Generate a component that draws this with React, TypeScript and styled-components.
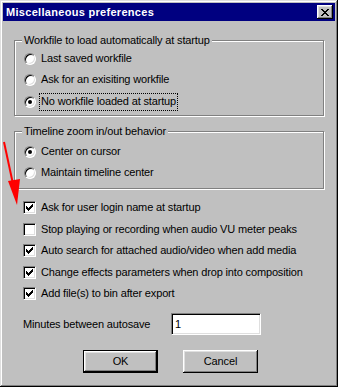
import React from 'react'
import styled, { createGlobalStyle } from 'styled-components'

const GlobalStyle = createGlobalStyle`
  html, body {
    margin: 0;
    padding: 0;
    background: #c0c0c0;
  }
  body {
    font-family: "Liberation Sans", Arial, sans-serif;
    font-size: 11px;
    letter-spacing: -0.15px;
    color: #000;
  }
`

const workfileOptions = [
  'Last saved workfile',
  'Ask for an exisiting workfile',
  'No workfile loaded at startup',
]

const zoomOptions = ['Center on cursor', 'Maintain timeline center']

const checks = [
  { label: 'Ask for user login name at startup', on: true },
  { label: 'Stop playing or recording when audio VU meter peaks', on: false },
  { label: 'Auto search for attached audio/video when add media', on: true },
  { label: 'Change effects parameters when drop into composition', on: true },
  { label: 'Add file(s) to bin after export', on: true },
]

const CheckMark = () => (
  <svg width="7" height="7" viewBox="0 0 7 7" shapeRendering="crispEdges">
    {[2, 3, 4, 3, 2, 1, 0].map((y, x) => (
      <rect key={x} x={x} y={y} width="1" height="3" fill="#000" />
    ))}
  </svg>
)

const CloseGlyph = () => (
  <svg width="8" height="7" viewBox="0 0 8 7" shapeRendering="crispEdges">
    {[0, 1, 2, 3, 4, 5, 6].map(i => (
      <React.Fragment key={i}>
        <rect x={i} y={i} width="2" height="1" fill="#000" />
        <rect x={6 - i} y={i} width="2" height="1" fill="#000" />
      </React.Fragment>
    ))}
  </svg>
)

const RedArrow = () => (
  <ArrowLayer width="30" height="80" viewBox="0 136 30 80">
    <line x1="4" y1="142" x2="13" y2="184" stroke="#f00" strokeWidth="2" />
    <polygon points="17,205 8,181 20,179" fill="#f00" />
  </ArrowLayer>
)

export default function App() {
  return (
    <>
      <GlobalStyle />
      <Window>
        <TitleBar>
          <TitleText>Miscellaneous preferences</TitleText>
          <CloseButton><CloseGlyph /></CloseButton>
        </TitleBar>
        <Body>
          <Group $h={76} $padTop={7}>
            <Legend>Workfile to load automatically at startup</Legend>
            {workfileOptions.map((o, i) => (
              <Row key={o}>
                <Radio $on={i === 2} />
                <Label $focus={i === 2}>{o}</Label>
              </Row>
            ))}
          </Group>
          <Group $h={58} $padTop={9} $gap={15}>
            <Legend>Timeline zoom in/out behavior</Legend>
            {zoomOptions.map((o, i) => (
              <Row key={o}>
                <Radio $on={i === 0} />
                <Label>{o}</Label>
              </Row>
            ))}
          </Group>
          <CheckList>
            {checks.map(c => (
              <Row key={c.label}>
                <Box>{c.on && <CheckMark />}</Box>
                <CheckLabel>{c.label}</CheckLabel>
              </Row>
            ))}
          </CheckList>
          <FieldRow>
            <FieldLabel>Minutes between autosave</FieldLabel>
            <Input>1</Input>
          </FieldRow>
          <Buttons>
            <Button $default>OK</Button>
            <Button>Cancel</Button>
          </Buttons>
        </Body>
        <RedArrow />
      </Window>
    </>
  )
}

const Window = styled.div`
  position: relative;
  width: 338px;
  height: 387px;
  box-sizing: border-box;
  padding: 3px;
  background: #c0c0c0;
  box-shadow:
    inset -1px -1px #000,
    inset 1px 1px #dfdfdf,
    inset -2px -2px #808080,
    inset 2px 2px #fff;
`

const TitleBar = styled.div`
  height: 18px;
  background: #000080;
  display: flex;
  align-items: center;
  justify-content: space-between;
  padding: 0 2px 0 3px;
`

const TitleText = styled.div`
  color: #fff;
  font-weight: bold;
  font-size: 11px;
  letter-spacing: 0.3px;
  line-height: 13px;
`

const CloseButton = styled.div`
  width: 16px;
  height: 14px;
  box-sizing: border-box;
  background: #c0c0c0;
  display: flex;
  align-items: center;
  justify-content: center;
  box-shadow:
    inset -1px -1px #000,
    inset 1px 1px #fff,
    inset -2px -2px #808080,
    inset 2px 2px #dfdfdf;
`

const Body = styled.div`
  padding: 19px 10px 0 11px;
  display: flex;
  flex-direction: column;
`

const Group = styled.div<{ $h: number; $padTop: number; $gap?: number }>`
  position: relative;
  height: ${p => p.$h}px;
  box-sizing: border-box;
  margin: ${p => p.$gap ?? 0}px 1px 0 0;
  padding: ${p => p.$padTop}px 0 0 9px;
  border: 1px solid #808080;
  box-shadow: 1px 1px 0 #fff, inset 1px 1px 0 #fff;
`

const Legend = styled.span`
  position: absolute;
  top: -7px;
  left: 7px;
  padding: 0 2px;
  line-height: 13px;
  background: #c0c0c0;
`

const Row = styled.div`
  height: 21.5px;
  display: flex;
  align-items: center;
`

const Radio = styled.span<{ $on?: boolean }>`
  position: relative;
  width: 12px;
  height: 12px;
  box-sizing: border-box;
  border-radius: 50%;
  background: #fff;
  border: 1px solid;
  border-color: #808080 #fff #fff #808080;
  box-shadow: inset 1px 1px #000, inset -1px -1px #dfdfdf;
  margin-right: 4px;
  flex: none;
  &::after {
    content: "";
    display: ${p => (p.$on ? 'block' : 'none')};
    position: absolute;
    left: 3px;
    top: 3px;
    width: 4px;
    height: 4px;
    border-radius: 50%;
    background: #000;
  }
`

const Label = styled.span<{ $focus?: boolean }>`
  padding: 1px 1px 2px;
  line-height: 13px;
  outline: ${p => (p.$focus ? '1px dotted #000' : 'none')};
`

const CheckList = styled.div`
  margin-top: 8px;
  padding-left: 9px;
`

const Box = styled.span`
  width: 13px;
  height: 13px;
  box-sizing: border-box;
  background: #fff;
  border: 1px solid;
  border-color: #808080 #fff #fff #808080;
  box-shadow: inset 1px 1px #000, inset -1px -1px #dfdfdf;
  display: flex;
  align-items: center;
  justify-content: center;
  margin-right: 5px;
  flex: none;
`

const CheckLabel = styled.span`
  line-height: 13px;
`

const FieldRow = styled.div`
  margin-top: 8px;
  padding-left: 9px;
  height: 22px;
  display: flex;
  align-items: center;
`

const FieldLabel = styled.span`
  width: 148px;
  flex: none;
`

const Input = styled.div`
  width: 90px;
  height: 22px;
  box-sizing: border-box;
  background: #fff;
  border: 1px solid;
  border-color: #808080 #fff #fff #808080;
  box-shadow: inset 1px 1px #000, inset -1px -1px #dfdfdf;
  padding: 0 3px;
  font-size: 11px;
  line-height: 20px;
`

const Buttons = styled.div`
  margin-top: 15px;
  display: flex;
  justify-content: center;
  gap: 25px;
  padding-left: 2px;
`

const Button = styled.div<{ $default?: boolean }>`
  width: 75px;
  height: 23px;
  box-sizing: border-box;
  display: flex;
  align-items: center;
  justify-content: center;
  background: #c0c0c0;
  border: ${p => (p.$default ? '1px solid #000' : 'none')};
  box-shadow:
    inset -1px -1px #000,
    inset 1px 1px #fff,
    inset -2px -2px #808080,
    inset 2px 2px #dfdfdf;
`

const ArrowLayer = styled.svg`
  position: absolute;
  left: 0;
  top: 136px;
  pointer-events: none;
`
